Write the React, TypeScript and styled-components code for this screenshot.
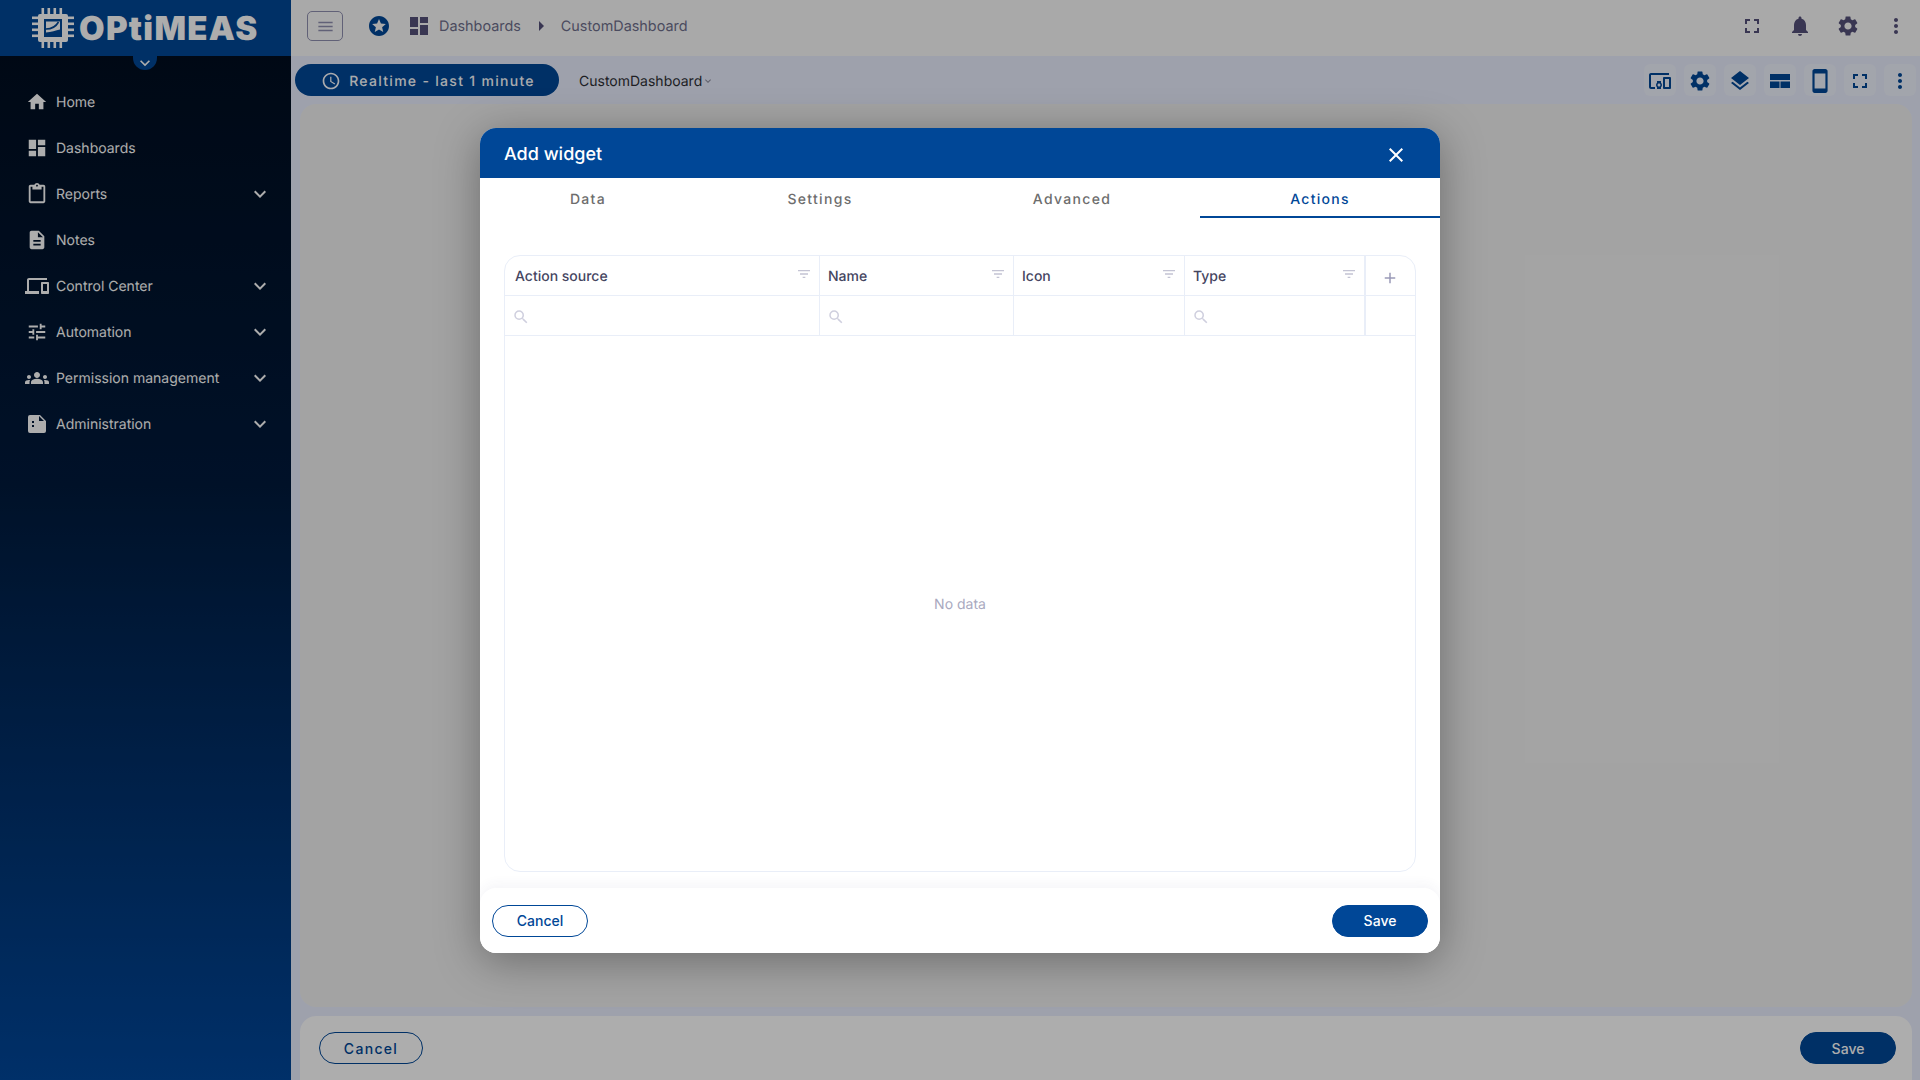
import { ReactNode } from "react";
import styled, { createGlobalStyle } from "styled-components";
import {
  MdAccessTime,
  MdAdd,
  MdArrowRight,
  MdClose,
  MdContentPaste,
  MdDashboard,
  MdDescription,
  MdDevices,
  MdExpandMore,
  MdFilterList,
  MdFullscreen,
  MdGroups,
  MdHome,
  MdLayers,
  MdMenu,
  MdMoreVert,
  MdNotifications,
  MdOutlineDevicesOther,
  MdSearch,
  MdSettings,
  MdStars,
  MdStayCurrentPortrait,
  MdTune,
} from "react-icons/md";

const BLUE = "#004797";

const GlobalStyle = createGlobalStyle`
  html, body {
    margin: 0;
    height: 100%;
    overflow: hidden;
  }
  body {
    font-family: Inter, "Liberation Sans", sans-serif;
    background: #e9eefe;
    text-rendering: geometricPrecision;
  }
  #root {
    height: 100%;
  }
  * {
    box-sizing: border-box;
  }
`;

const Page = styled.div`
  display: flex;
  height: 100vh;
  width: 100%;
  position: relative;
`;

const Sidebar = styled.aside`
  width: 291px;
  flex: none;
  display: flex;
  flex-direction: column;
  background: linear-gradient(180deg, #010c1c 0%, #011a3c 45%, #00479b 100%);
  position: relative;
`;

const LogoBar = styled.div`
  height: 56px;
  background: ${BLUE};
  display: flex;
  align-items: center;
  padding-left: 32px;
  gap: 5px;
  flex: none;
`;

const LogoText = styled.span`
  font-size: 33px;
  font-weight: 900;
  letter-spacing: 1.3px;
  color: #fff;
  line-height: 1;
`;

const CollapseTab = styled.div`
  position: absolute;
  left: 133px;
  top: 56px;
  width: 24px;
  height: 14px;
  border-radius: 0 0 12px 12px;
  background: ${BLUE};
  color: #fff;
  display: flex;
  align-items: center;
  justify-content: center;
`;

const NavList = styled.nav`
  display: flex;
  flex-direction: column;
  padding-top: 23px;
`;

const NavRow = styled.div`
  height: 46px;
  display: flex;
  align-items: center;
  padding: 0 19px 0 25px;
  color: #fff;
  font-size: 14px;
  gap: 7px;
`;

const NavIcon = styled.span`
  width: 24px;
  height: 24px;
  display: flex;
  align-items: center;
  justify-content: center;
  flex: none;
`;

const NavLabel = styled.span`
  flex: 1;
`;

const Main = styled.div`
  flex: 1;
  min-width: 0;
  display: flex;
  flex-direction: column;
`;

const TopBar = styled.header`
  height: 56px;
  flex: none;
  background: #fafafa;
  display: flex;
  align-items: center;
  padding: 0 0 4px 16px;
`;

const MenuButton = styled.button`
  width: 36px;
  height: 30px;
  padding: 0;
  border: 1px solid #8f8fb0;
  border-radius: 5px;
  background: transparent;
  color: #8f8fb0;
  display: flex;
  align-items: center;
  justify-content: center;
  margin-right: 24px;
`;

const Crumbs = styled.div`
  display: flex;
  align-items: center;
  color: #6f6f8c;
  font-size: 14.4px;
  flex: 1;
`;

const CrumbStar = styled.span`
  display: flex;
  color: ${BLUE};
  margin-right: 16px;
`;

const CrumbIcon = styled.span`
  display: flex;
  color: #55507a;
  margin-right: 8px;
`;

const CrumbArrow = styled.span`
  display: flex;
  color: #55507a;
  margin: 0 8px;
`;

const TopActions = styled.div`
  display: flex;
  align-items: center;
  color: #55507a;
`;

const TopAction = styled.span`
  width: 48px;
  display: flex;
  justify-content: center;
`;

const ToolBar = styled.div`
  height: 48px;
  flex: none;
  display: flex;
  align-items: center;
  padding: 0 4px;
`;

const RangePill = styled.div`
  width: 264px;
  height: 32px;
  border-radius: 16px;
  background: ${BLUE};
  color: #fbfcff;
  display: flex;
  align-items: center;
  justify-content: center;
  gap: 8px;
  padding: 2px 0 0 2px;
  font-size: 14px;
  font-weight: 500;
  letter-spacing: 1.3px;
`;

const DashboardSelect = styled.div`
  display: flex;
  align-items: center;
  margin-left: 20px;
  padding-top: 2px;
  color: #2e2e35;
  font-size: 14px;
  flex: 1;
`;

const SelectCaret = styled.span`
  display: flex;
  color: #8f8fa0;
`;

const ToolButtons = styled.div`
  display: flex;
  gap: 8px;
`;

const ToolButton = styled.span`
  width: 32px;
  height: 32px;
  padding-top: 2px;
  border-radius: 6px;
  background: rgba(255, 255, 255, 0.3);
  color: ${BLUE};
  display: flex;
  align-items: center;
  justify-content: center;
`;

const Canvas = styled.div`
  flex: 1;
  display: flex;
  flex-direction: column;
  gap: 9px;
  padding: 0 8px 0 9px;
  min-height: 0;
`;

const CanvasPanel = styled.div`
  flex: 1;
  background: #f1f1f1;
  border-radius: 16px;
`;

const BottomBar = styled.div`
  height: 64px;
  flex: none;
  background: #fff;
  border-radius: 16px 16px 0 0;
  display: flex;
  align-items: center;
  justify-content: space-between;
  padding: 0 16px 0 19px;
`;

const PillButton = styled.button<{ $primary?: boolean; $wide?: boolean; $spaced?: boolean }>`
  width: ${(p) => (p.$wide ? 104 : 96)}px;
  height: 32px;
  border-radius: 16px;
  border: 1.5px solid ${BLUE};
  background: ${(p) => (p.$primary ? BLUE : "#fff")};
  color: ${(p) => (p.$primary ? "#fff" : BLUE)};
  font-family: inherit;
  font-size: 14px;
  font-weight: 500;
  letter-spacing: ${(p) => (p.$spaced ? 1.3 : 0)}px;
  padding: 0;
`;

const Backdrop = styled.div`
  position: absolute;
  inset: 0;
  background: rgba(0, 0, 0, 0.32);
  display: flex;
  justify-content: center;
  align-items: flex-start;
  padding-top: 128px;
`;

const Modal = styled.div`
  width: 960px;
  height: 825px;
  background: #fff;
  border-radius: 16px;
  box-shadow: 0 8px 44px rgba(0, 0, 0, 0.34);
  display: flex;
  flex-direction: column;
  overflow: hidden;
`;

const ModalHeader = styled.div`
  height: 50px;
  flex: none;
  background: ${BLUE};
  color: #fff;
  display: flex;
  align-items: center;
  justify-content: space-between;
  padding: 0 32px 0 24px;
`;

const ModalTitle = styled.h2`
  margin: 0;
  padding-top: 2px;
  font-size: 18px;
  font-weight: 500;
`;

const CloseButton = styled.span`
  display: flex;
  margin-top: 4px;
`;

const Tabs = styled.div`
  height: 40px;
  flex: none;
  display: grid;
  grid-template-columns: 216px 248px 256px 240px;
`;

const Tab = styled.div<{ $active?: boolean }>`
  display: flex;
  align-items: center;
  justify-content: center;
  padding-top: 4px;
  font-size: 14px;
  font-weight: 500;
  letter-spacing: 1.3px;
  color: ${(p) => (p.$active ? BLUE : "#6d6d6d")};
  border-bottom: 2px solid ${(p) => (p.$active ? BLUE : "transparent")};
`;

const ModalBody = styled.div`
  flex: 1;
  min-height: 0;
  padding: 37px 24px 16px;
  display: flex;
`;

const Table = styled.div`
  flex: 1;
  border: 1px solid #e9eef8;
  border-radius: 16px;
  display: flex;
  flex-direction: column;
`;

const TableRow = styled.div`
  height: 40px;
  flex: none;
  display: grid;
  grid-template-columns: 315px 194px 171px 181px 1fr;
  border-bottom: 1px solid #e9eef8;
`;

const HeadCell = styled.div<{ $thick?: boolean }>`
  display: flex;
  align-items: center;
  justify-content: space-between;
  padding: 2px 7px 0 8px;
  font-size: 14px;
  font-weight: 500;
  color: #45455f;
  border-right: ${(p) => (p.$thick ? 2 : 1)}px solid #e9eef8;
  &:first-child {
    padding-left: 10px;
  }
`;

const FilterGlyph = styled.span`
  display: flex;
  color: #c4c4d4;
  margin-top: -5px;
`;

const AddCell = styled.div`
  display: flex;
  align-items: center;
  justify-content: center;
  padding: 4px 2px 0 0;
  color: #9a9ab8;
`;

const SearchCell = styled.div<{ $thick?: boolean; $last?: boolean }>`
  display: flex;
  align-items: center;
  padding: 3px 0 0 7px;
  color: #cfcfde;
  border-right: ${(p) => (p.$last ? 0 : p.$thick ? 2 : 1)}px solid #e9eef8;
`;

const EmptyState = styled.div`
  flex: 1;
  display: flex;
  align-items: center;
  justify-content: center;
  padding-top: 2px;
  font-size: 14px;
  color: #a9a9c0;
`;

const ModalFooter = styled.div`
  height: 65px;
  flex: none;
  background: #fff;
  border-radius: 16px 16px 0 0;
  box-shadow: 0 -4px 12px rgba(60, 60, 110, 0.05);
  display: flex;
  align-items: center;
  justify-content: space-between;
  padding: 0 12px;
`;

function ChipLogo() {
  const offsets = [8.5, 14.5, 20.5, 26.5];
  return (
    <svg width="42" height="40" viewBox="0 0 42 40" fill="#fff">
      {offsets.map((o) => (
        <g key={o}>
          <rect x={o + 1} y="0" width="2.6" height="7" />
          <rect x={o + 1} y="33" width="2.6" height="7" />
          <rect x="0" y={o} width="7" height="2.6" />
          <rect x="35" y={o} width="7" height="2.6" />
        </g>
      ))}
      <rect x="6" y="6" width="30" height="28" rx="2" />
      <rect x="12" y="11" width="18" height="18" fill={BLUE} />
      <path d="M14 13.5h14v8c-4 1-9 2.5-14 3z" fill="#fff" />
      <path d="M14 21c6 0 10-2.5 12.5-7" stroke={BLUE} strokeWidth="1.6" fill="none" />
    </svg>
  );
}

function LayoutGlyph() {
  return (
    <svg width="20" height="16" viewBox="0 0 20 16" fill="currentColor">
      <rect x="0" y="1" width="20" height="6" />
      <rect x="0" y="8.5" width="9.5" height="6.5" />
      <rect x="10.5" y="8.5" width="9.5" height="6.5" />
    </svg>
  );
}

function AdminGlyph() {
  return (
    <svg width="24" height="24" viewBox="0 0 24 24" fill="currentColor">
      <path d="M5 3h10l6 6v10a2 2 0 0 1-2 2H5a2 2 0 0 1-2-2V5a2 2 0 0 1 2-2zm2 6v2h2V9zm0 4v2h2v-2zm7-9v5h5z" fillRule="evenodd" />
    </svg>
  );
}

type NavEntry = { label: string; icon: ReactNode; expandable?: boolean };

const navEntries: NavEntry[] = [
  { label: "Home", icon: <MdHome size={22} /> },
  { label: "Dashboards", icon: <MdDashboard size={22} /> },
  { label: "Reports", icon: <MdContentPaste size={22} />, expandable: true },
  { label: "Notes", icon: <MdDescription size={22} /> },
  { label: "Control Center", icon: <MdDevices size={24} />, expandable: true },
  { label: "Automation", icon: <MdTune size={22} />, expandable: true },
  { label: "Permission management", icon: <MdGroups size={24} />, expandable: true },
  { label: "Administration", icon: <AdminGlyph />, expandable: true },
];

const columns = ["Action source", "Name", "Icon", "Type"];

export default function App() {
  return (
    <Page>
      <GlobalStyle />
      <Sidebar>
        <LogoBar>
          <ChipLogo />
          <LogoText>OPtiMEAS</LogoText>
        </LogoBar>
        <CollapseTab>
          <MdExpandMore size={20} />
        </CollapseTab>
        <NavList>
          {navEntries.map((entry) => (
            <NavRow key={entry.label}>
              <NavIcon>{entry.icon}</NavIcon>
              <NavLabel>{entry.label}</NavLabel>
              {entry.expandable && <MdExpandMore size={24} />}
            </NavRow>
          ))}
        </NavList>
      </Sidebar>

      <Main>
        <TopBar>
          <MenuButton>
            <MdMenu size={19} />
          </MenuButton>
          <Crumbs>
            <CrumbStar>
              <MdStars size={24} />
            </CrumbStar>
            <CrumbIcon>
              <MdDashboard size={24} />
            </CrumbIcon>
            Dashboards
            <CrumbArrow>
              <MdArrowRight size={24} />
            </CrumbArrow>
            CustomDashboard
          </Crumbs>
          <TopActions>
            <TopAction>
              <MdFullscreen size={24} />
            </TopAction>
            <TopAction>
              <MdNotifications size={24} />
            </TopAction>
            <TopAction>
              <MdSettings size={24} />
            </TopAction>
            <TopAction>
              <MdMoreVert size={24} />
            </TopAction>
          </TopActions>
        </TopBar>

        <ToolBar>
          <RangePill>
            <MdAccessTime size={20} />
            Realtime - last 1 minute
          </RangePill>
          <DashboardSelect>
            CustomDashboard
            <SelectCaret>
              <MdExpandMore size={12} />
            </SelectCaret>
          </DashboardSelect>
          <ToolButtons>
            <ToolButton>
              <MdOutlineDevicesOther size={24} />
            </ToolButton>
            <ToolButton>
              <MdSettings size={24} />
            </ToolButton>
            <ToolButton>
              <MdLayers size={24} />
            </ToolButton>
            <ToolButton>
              <LayoutGlyph />
            </ToolButton>
            <ToolButton>
              <MdStayCurrentPortrait size={26} />
            </ToolButton>
            <ToolButton>
              <MdFullscreen size={24} />
            </ToolButton>
            <ToolButton>
              <MdMoreVert size={24} />
            </ToolButton>
          </ToolButtons>
        </ToolBar>

        <Canvas>
          <CanvasPanel />
          <BottomBar>
            <PillButton $wide $spaced>
              Cancel
            </PillButton>
            <PillButton $primary>Save</PillButton>
          </BottomBar>
        </Canvas>
      </Main>

      <Backdrop>
        <Modal>
          <ModalHeader>
            <ModalTitle>Add widget</ModalTitle>
            <CloseButton>
              <MdClose size={24} />
            </CloseButton>
          </ModalHeader>
          <Tabs>
            <Tab>Data</Tab>
            <Tab>Settings</Tab>
            <Tab>Advanced</Tab>
            <Tab $active>Actions</Tab>
          </Tabs>
          <ModalBody>
            <Table>
              <TableRow>
                {columns.map((name, i) => (
                  <HeadCell key={name} $thick={i === 3}>
                    {name}
                    <FilterGlyph>
                      <MdFilterList size={16} />
                    </FilterGlyph>
                  </HeadCell>
                ))}
                <AddCell>
                  <MdAdd size={18} />
                </AddCell>
              </TableRow>
              <TableRow>
                <SearchCell>
                  <MdSearch size={18} />
                </SearchCell>
                <SearchCell>
                  <MdSearch size={18} />
                </SearchCell>
                <SearchCell />
                <SearchCell $thick>
                  <MdSearch size={18} />
                </SearchCell>
                <SearchCell $last />
              </TableRow>
              <EmptyState>No data</EmptyState>
            </Table>
          </ModalBody>
          <ModalFooter>
            <PillButton>Cancel</PillButton>
            <PillButton $primary>Save</PillButton>
          </ModalFooter>
        </Modal>
      </Backdrop>
    </Page>
  );
}
